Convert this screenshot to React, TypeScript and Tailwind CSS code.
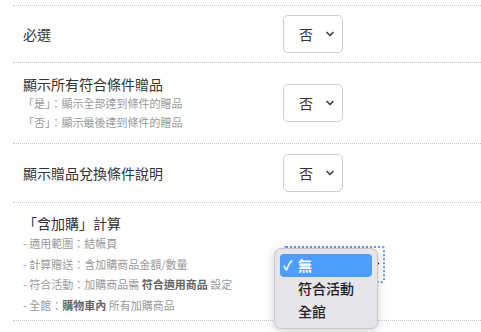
import { ChevronDown } from "lucide-react";

const FONT = { fontFamily: '"Noto Sans CJK TC", "Noto Sans", sans-serif' };

function FakeSelect({ value }: { value: string }) {
  return (
    <div className="flex h-[38px] w-[60px] items-center justify-between rounded-[5px] border border-[#cfcfcf] bg-white pl-[15px] pr-[6px] text-[14px] text-[#333]">
      <span>{value}</span>
      <ChevronDown size={12} strokeWidth={3.5} className="text-[#444]" />
    </div>
  );
}

const OPTIONS = ["無", "符合活動", "全館"];

function OpenSelect() {
  return (
    <div className="relative">
      <div className="flex h-[37px] w-[102px] items-center justify-end rounded-[3px] border-2 border-dotted border-[#5b9ee8] pr-[5px]">
        <span className="block h-[5px] w-[2px] rotate-45 bg-[#333]" />
      </div>
      <div className="absolute left-[-9px] top-[2px] w-[104px] rounded-[7px] border border-[#c9c6cc] bg-[#e7e4ea] p-[5px] shadow-[0_2px_10px_rgba(0,0,0,0.18)]">
        {OPTIONS.map((o, i) => (
          <div
            key={o}
            className={`flex h-[23px] items-center rounded-[4px] text-[14px] ${i === 0 ? "bg-[#4c9ef8] text-white" : "text-[#222]"}`}
          >
            <span className="w-[18px] pl-[3px] text-[13px] font-bold">{i === 0 ? "✓" : ""}</span>
            <span className={i === 0 ? "font-bold" : "font-medium"}>{o}</span>
          </div>
        ))}
      </div>
    </div>
  );
}

export default function App() {
  return (
    <div className="h-[332px] w-[481px] overflow-hidden bg-white" style={FONT}>
      <div className="ml-[13px] mt-[5px] border-t border-dotted border-[#c8c8c8]">
        <div className="flex items-center border-b border-dotted border-[#c8c8c8] py-[9px] pl-[10px]">
          <div className="w-[260px] text-[14px] text-[#333]">必選</div>
          <FakeSelect value="否" />
        </div>

        <div className="flex items-center border-b border-dotted border-[#c8c8c8] py-[11px] pl-[10px]">
          <div className="w-[260px]">
            <p className="text-[14px] leading-[20px] text-[#333]">顯示所有符合條件贈品</p>
            <p className="text-[11px] leading-[19px] text-[#999]">「是」：顯示全部達到條件的贈品</p>
            <p className="text-[11px] leading-[19px] text-[#999]">「否」：顯示最後達到條件的贈品</p>
          </div>
          <FakeSelect value="否" />
        </div>

        <div className="flex items-center border-b border-dotted border-[#c8c8c8] py-[10px] pl-[10px]">
          <div className="w-[260px] text-[14px] text-[#333]">顯示贈品兌換條件說明</div>
          <FakeSelect value="否" />
        </div>

        <div className="flex items-center border-b border-dotted border-[#c8c8c8] pb-[5px] pt-[10px] pl-[10px]">
          <div className="w-[260px]">
            <p className="text-[14px] leading-[20px] text-[#333]">「含加購」計算</p>
            <ul className="text-[11px] leading-[20.5px] text-[#999]">
              <li>- 適用範圍：結帳頁</li>
              <li>- 計算贈送：含加購商品金額/數量</li>
              <li>
                - 符合活動：加購商品需 <b className="font-bold text-[#666]">符合適用商品</b> 設定
              </li>
              <li>
                - 全館：<b className="font-bold text-[#666]">購物車內</b> 所有加購商品
              </li>
            </ul>
          </div>
          <OpenSelect />
        </div>
      </div>
    </div>
  );
}
